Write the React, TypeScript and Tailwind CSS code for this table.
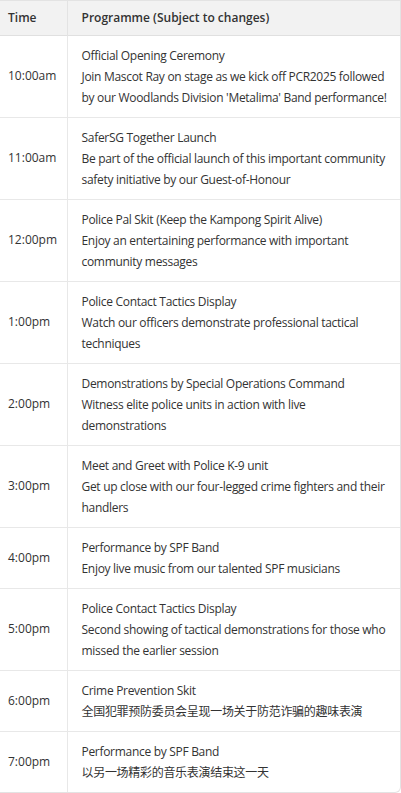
import React from 'react';

type Item = { time: string; title: string; desc: string };

const schedule: Item[] = [
  { time: '10:00am', title: 'Official Opening Ceremony', desc: "Join Mascot Ray on stage as we kick off PCR2025 followed by our Woodlands Division 'Metalima' Band performance!" },
  { time: '11:00am', title: 'SaferSG Together Launch', desc: 'Be part of the official launch of this important community safety initiative by our Guest-of-Honour' },
  { time: '12:00pm', title: 'Police Pal Skit (Keep the Kampong Spirit Alive)', desc: 'Enjoy an entertaining performance with important community messages' },
  { time: '1:00pm', title: 'Police Contact Tactics Display', desc: 'Watch our officers demonstrate professional tactical techniques' },
  { time: '2:00pm', title: 'Demonstrations by Special Operations Command', desc: 'Witness elite police units in action with live demonstrations' },
  { time: '3:00pm', title: 'Meet and Greet with Police K-9 unit', desc: 'Get up close with our four-legged crime fighters and their handlers' },
  { time: '4:00pm', title: 'Performance by SPF Band', desc: 'Enjoy live music from our talented SPF musicians' },
  { time: '5:00pm', title: 'Police Contact Tactics Display', desc: 'Second showing of tactical demonstrations for those who missed the earlier session' },
  { time: '6:00pm', title: 'Crime Prevention Skit', desc: '全国犯罪预防委员会呈现一场关于防范诈骗的趣味表演' },
  { time: '7:00pm', title: 'Performance by SPF Band', desc: '以另一场精彩的音乐表演结束这一天' },
];

export default function App() {
  return (
    <div className="w-[401px] min-h-[793px] bg-white font-['Open_Sans','Noto_Sans_CJK_SC',sans-serif] text-[#333] text-[12px]">
      <div className="w-[401px] border border-[#e3e3e3] border-l-0 rounded-br-md overflow-hidden">
        <table className="w-full border-collapse">
          <thead>
            <tr className="bg-[#f2f2f2] border-b border-[#e0e0e0]">
              <th className="w-[67px] h-[34px] pl-2 text-left font-semibold border-r border-[#e3e3e3]">Time</th>
              <th className="h-[34px] pl-[14px] text-left font-semibold">Programme (Subject to changes)</th>
            </tr>
          </thead>
          <tbody>
            {schedule.map((row, i) => (
              <tr key={i} className="border-b border-[#e8e8e8] last:border-b-0">
                <td className="pl-2 align-middle border-r border-[#e8e8e8] whitespace-nowrap">{row.time}</td>
                <td className="pl-[14px] pr-3 py-[9px] leading-[21px] tracking-[-0.3px]">
                  <div>{row.title}</div>
                  <div>{row.desc}</div>
                </td>
              </tr>
            ))}
          </tbody>
        </table>
      </div>
    </div>
  );
}
